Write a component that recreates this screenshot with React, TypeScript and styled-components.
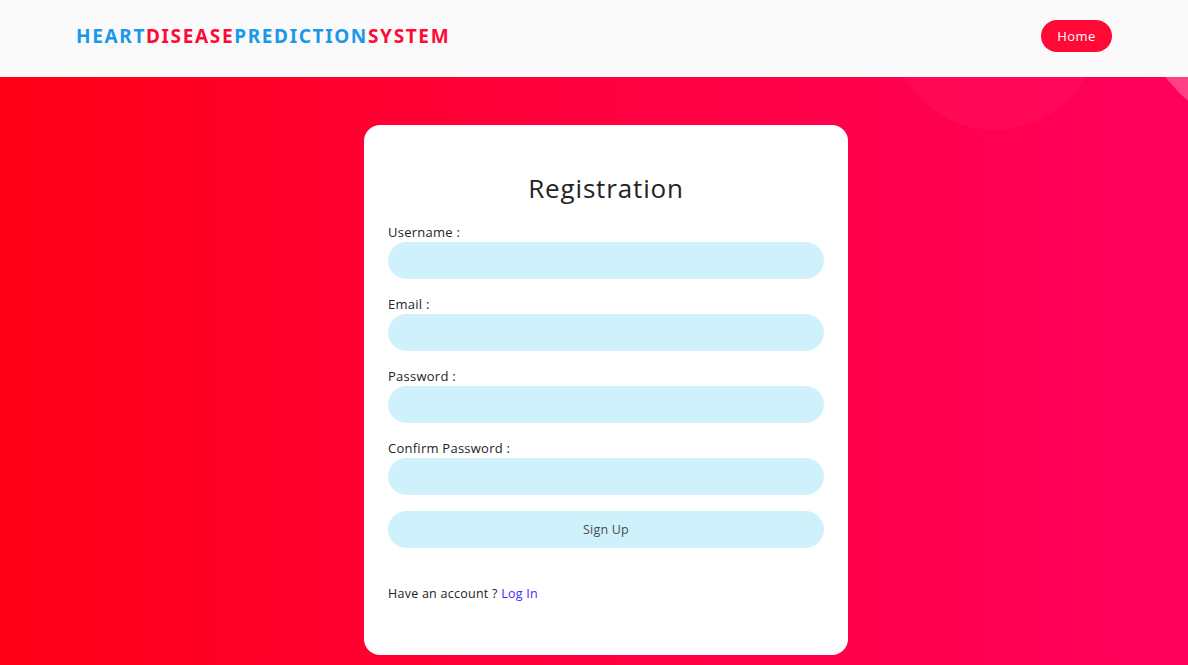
import React from 'react';
import styled, {createGlobalStyle} from 'styled-components';

const GlobalStyle = createGlobalStyle`
  * { box-sizing: border-box; }
  body {
    margin: 0;
    font-family: "Open Sans", "Noto Sans", sans-serif;
    color: #212529;
    background: #ff0a3a;
  }
`;

const Page = styled.div`
  min-height: 665px;
  display: flex;
  flex-direction: column;
  position: relative;
  overflow: hidden;
  background: linear-gradient(90deg, #ff0016 0%, #ff003c 45%, #ff005c 100%);
`;

const Bubble = styled.div<{$size: number; $top: number; $left: number; $tint: string}>`
  position: absolute;
  width: ${p => p.$size}px;
  height: ${p => p.$size}px;
  top: ${p => p.$top}px;
  left: ${p => p.$left}px;
  border-radius: 50%;
  background: ${p => p.$tint};
  pointer-events: none;
`;

const Header = styled.header`
  position: relative;
  z-index: 2;
  height: 77px;
  background: #fafafa;
  display: flex;
  align-items: center;
  justify-content: space-between;
  padding: 0 76px;
`;

const Brand = styled.div`
  font-family: "Noto Sans", "Open Sans", sans-serif;
  font-weight: 700;
  font-size: 19px;
  letter-spacing: 1.65px;
  margin-top: -6px;
`;

const BrandPart = styled.span<{$red?: boolean}>`
  color: ${p => (p.$red ? '#ff0a36' : '#1a98ea')};
`;

const HomeButton = styled.a`
  display: inline-flex;
  align-items: center;
  justify-content: center;
  width: 71px;
  height: 32px;
  margin-top: -6px;
  border-radius: 16px;
  background: #ff0a36;
  color: #fff;
  font-size: 13px;
  letter-spacing: 0.4px;
  text-decoration: none;
`;

const Main = styled.main`
  position: relative;
  z-index: 1;
  display: flex;
  justify-content: center;
  padding: 48px 0 0 24px;
`;

const Card = styled.div`
  width: 484px;
  height: 530px;
  background: #fff;
  border-radius: 16px;
  padding: 45px 24px 50px;
  display: flex;
  flex-direction: column;
`;

const Title = styled.h2`
  margin: 0 0 16px;
  text-align: center;
  font-size: 26px;
  font-weight: 500;
  line-height: 36px;
  letter-spacing: 0.85px;
  color: #212529;
`;

const Field = styled.div`
  display: flex;
  flex-direction: column;
  margin-bottom: 15px;
`;

const Label = styled.label`
  font-size: 13px;
  line-height: 20px;
  letter-spacing: 0.25px;
  color: #212529;
`;

const Input = styled.input`
  height: 37px;
  border: none;
  border-radius: 19px;
  background: #cff1fc;
  padding: 0 18px;
  font: inherit;
  outline: none;
`;

const SubmitButton = styled.button`
  margin-top: 1px;
  height: 37px;
  border: none;
  border-radius: 19px;
  background: #cff1fc;
  color: #4a4a4a;
  font-family: inherit;
  font-size: 12.5px;
  letter-spacing: 0.2px;
`;

const Footer = styled.p`
  margin: 36px 0 0;
  font-size: 12.5px;
  line-height: 20px;
  letter-spacing: 0.25px;
  color: #212529;
`;

const LoginLink = styled.a`
  color: #4a25ff;
  text-decoration: none;
`;

const fields = ['Username :', 'Email :', 'Password :', 'Confirm Password :'];

const App = () => {
  return (
    <Page>
      <GlobalStyle/>
      <Bubble $size={206} $top={-76} $left={892} $tint="rgba(255, 255, 255, 0.03)"/>
      <Bubble $size={316} $top={-178} $left={1132} $tint="rgba(255, 255, 255, 0.25)"/>
      <Header>
        <Brand>
          <BrandPart>HEART</BrandPart>
          <BrandPart $red>DISEASE</BrandPart>
          <BrandPart>PREDICTION</BrandPart>
          <BrandPart $red>SYSTEM</BrandPart>
        </Brand>
        <HomeButton href="#">Home</HomeButton>
      </Header>
      <Main>
        <Card>
          <Title>Registration</Title>
          {fields.map(label => (
            <Field key={label}>
              <Label>{label}</Label>
              <Input type={label.includes('Password') ? 'password' : 'text'}/>
            </Field>
          ))}
          <SubmitButton>Sign Up</SubmitButton>
          <Footer>
            Have an account ? <LoginLink href="#">Log In</LoginLink>
          </Footer>
        </Card>
      </Main>
    </Page>
  );
};

export default App;
